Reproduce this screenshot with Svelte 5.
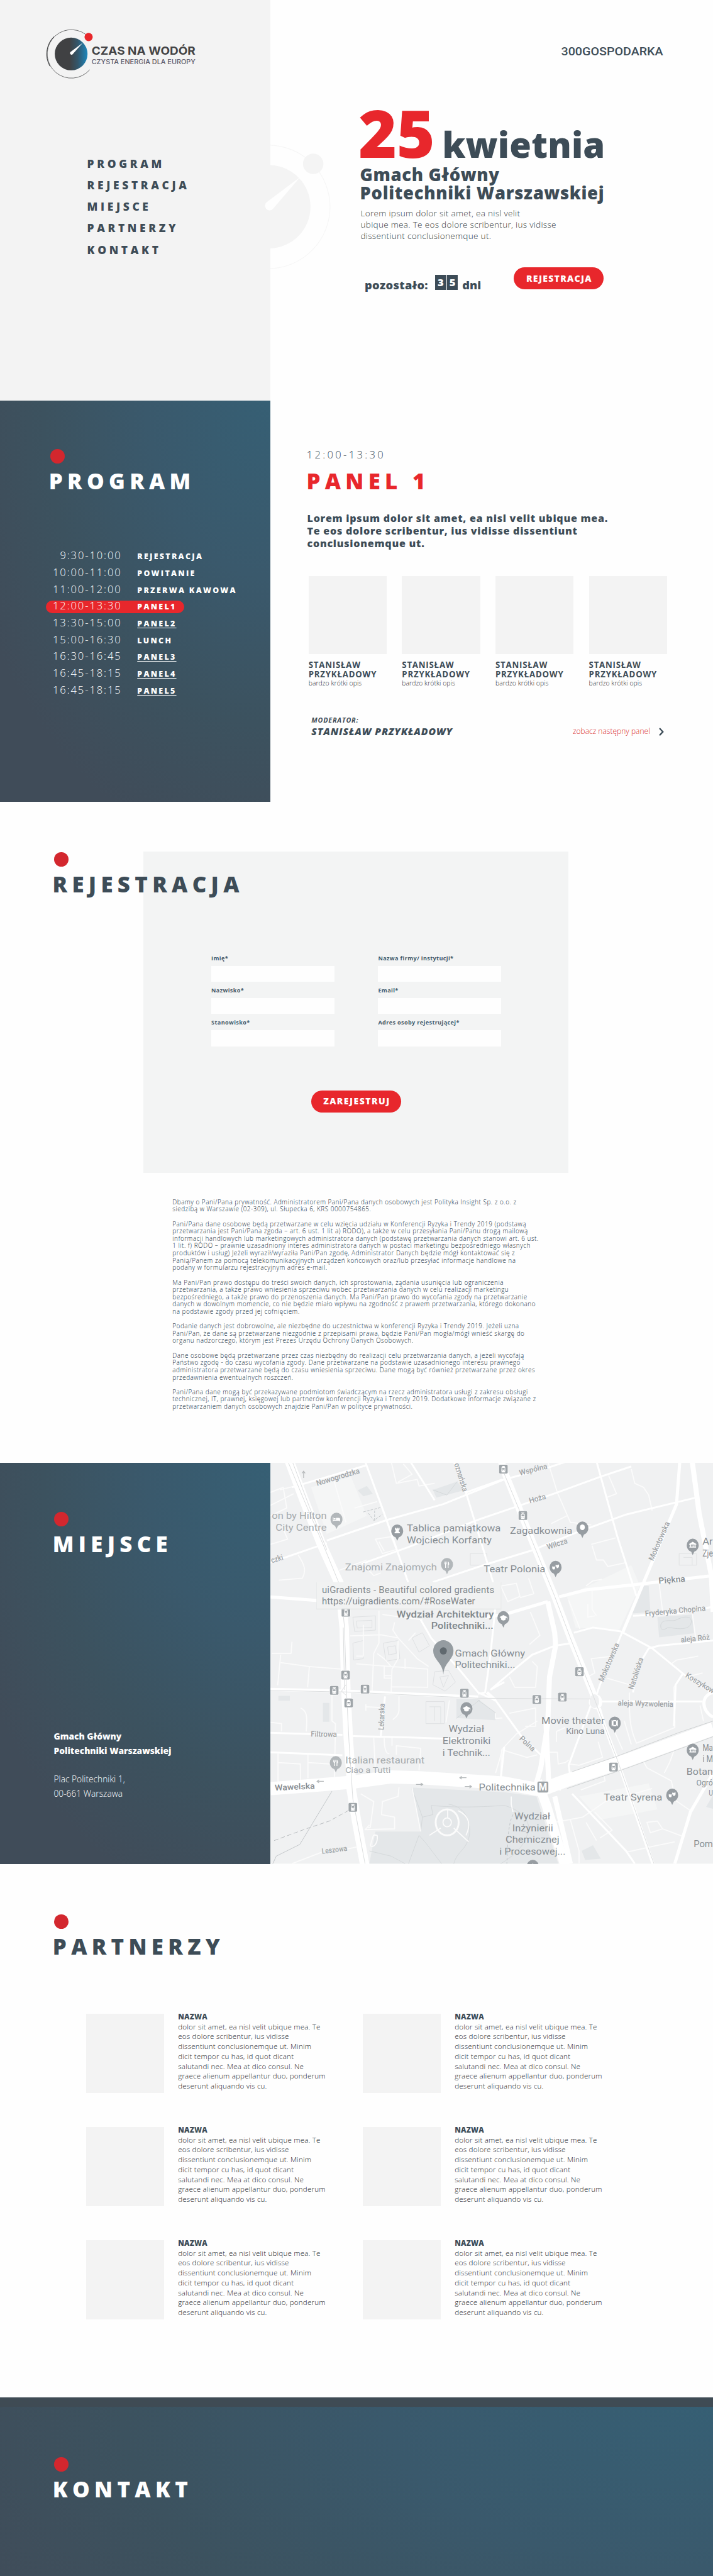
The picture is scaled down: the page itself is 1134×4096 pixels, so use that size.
<script>
  const nav = ['PROGRAM', 'REJESTRACJA', 'MIEJSCE', 'PARTNERZY', 'KONTAKT'];

  const schedule = [
    { time: '9:30-10:00', name: 'REJESTRACJA' },
    { time: '10:00-11:00', name: 'POWITANIE' },
    { time: '11:00-12:00', name: 'PRZERWA KAWOWA' },
    { time: '12:00-13:30', name: 'PANEL1', active: true },
    { time: '13:30-15:00', name: 'PANEL2', link: true },
    { time: '15:00-16:30', name: 'LUNCH' },
    { time: '16:30-16:45', name: 'PANEL3', link: true },
    { time: '16:45-18:15', name: 'PANEL4', link: true },
    { time: '16:45-18:15', name: 'PANEL5', link: true }
  ];

  const speakers = [1, 2, 3, 4];
  const partners = [1, 2, 3, 4, 5, 6];

  const fields = [
    'Imię*', 'Nazwa firmy/ instytucji*',
    'Nazwisko*', 'Email*',
    'Stanowisko*', 'Adres osoby rejestrującej*'
  ];

  const legal = [
    ['Dbamy o Pani/Pana prywatność. Administratorem Pani/Pana danych osobowych jest Polityka Insight Sp. z o.o. z',
      'siedzibą w Warszawie (02-309), ul. Słupecka 6, KRS 0000754865.'],
    ['Pani/Pana dane osobowe będą przetwarzane w celu wzięcia udziału w Konferencji Ryzyka i Trendy 2019 (podstawą',
      'przetwarzania jest Pani/Pana zgoda – art. 6 ust. 1 lit a) RODO), a także w celu przesyłania Pani/Panu drogą mailową',
      'informacji handlowych lub marketingowych administratora danych (podstawę przetwarzania danych stanowi art. 6 ust.',
      '1 lit. f) RODO – prawnie uzasadniony interes administratora danych w postaci marketingu bezpośredniego własnych',
      'produktów i usług) Jeżeli wyraził/wyraziła Pani/Pan zgodę, Administrator Danych będzie mógł kontaktować się z',
      'Panią/Panem za pomocą telekomunikacyjnych urządzeń końcowych oraz/lub przesyłać informacje handlowe na',
      'podany w formularzu rejestracyjnym adres e-mail.'],
    ['Ma Pani/Pan prawo dostępu do treści swoich danych, ich sprostowania, żądania usunięcia lub ograniczenia',
      'przetwarzania, a także prawo wniesienia sprzeciwu wobec przetwarzania danych w celu realizacji marketingu',
      'bezpośredniego, a także prawo do przenoszenia danych. Ma Pani/Pan prawo do wycofania zgody na przetwarzanie',
      'danych w dowolnym momencie, co nie będzie miało wpływu na zgodność z prawem przetwarzania, którego dokonano',
      'na podstawie zgody przed jej cofnięciem.'],
    ['Podanie danych jest dobrowolne, ale niezbędne do uczestnictwa w konferencji Ryzyka i Trendy 2019. Jeżeli uzna',
      'Pani/Pan, że dane są przetwarzane niezgodnie z przepisami prawa, będzie Pani/Pan mogła/mógł wnieść skargę do',
      'organu nadzorczego, którym jest Prezes Urzędu Ochrony Danych Osobowych.'],
    ['Dane osobowe będą przetwarzane przez czas niezbędny do realizacji celu przetwarzania danych, a jeżeli wycofają',
      'Państwo zgodę - do czasu wycofania zgody. Dane przetwarzane na podstawie uzasadnionego interesu prawnego',
      'administratora przetwarzane będą do czasu wniesienia sprzeciwu. Dane mogą być również przetwarzane przez okres',
      'przedawnienia ewentualnych roszczeń.'],
    ['Pani/Pana dane mogą być przekazywane podmiotom świadczącym na rzecz administratora usługi z zakresu obsługi',
      'technicznej, IT, prawnej, księgowej lub partnerów konferencji Ryzyka i Trendy 2019. Dodatkowe informacje związane z',
      'przetwarzaniem danych osobowych znajdzie Pani/Pan w polityce prywatności.']
  ];

  // The map grid is finer across than down; K restores the proportions of glyphs and icons.
  const K = 1.4925;

  // text, start x, start y, end x, end y, font size, tone
  const labels = [
    ['on by Hilton', 14, 222, 330, 222, 37, 'soft'],
    ['City Centre', 36, 267, 330, 267, 37, 'soft'],
    ['Nowogrodzka', 275, 95, 522, 45, 30, 'road'],
    ['czki', 15, 392, 82, 378, 30, 'road'],
    ['Tablica pamiątkowa', 790, 270, 1330, 270, 37, 'poi'],
    ['Wojciech Korfanty', 790, 315, 1277, 315, 37, 'poi'],
    ['Znajomi Znajomych', 435, 420, 963, 420, 37, 'soft'],
    ['Teatr Polonia', 1232, 427, 1586, 427, 37, 'poi'],
    ['Wydział Architektury', 731, 601, 1290, 601, 37, 'strong'],
    ['Politechniki...', 930, 646, 1288, 646, 37, 'strong'],
    ['Gmach Główny', 1066, 751, 1470, 751, 37, 'poi'],
    ['Politechniki...', 1066, 796, 1413, 796, 37, 'poi'],
    ['oznańska', 1062, 10, 1112, 118, 30, 'road'],
    ['Lekarska', 657, 1035, 664, 933, 30, 'road'],
    ['Filtrowa', 238, 1060, 388, 1061, 30, 'road'],
    ['Wydział', 1030, 1043, 1235, 1043, 37, 'poi'],
    ['Elektroniki', 995, 1088, 1272, 1088, 37, 'poi'],
    ['i Technik...', 995, 1134, 1270, 1134, 37, 'poi'],
    ['Italian restaurant', 437, 1162, 892, 1162, 37, 'soft'],
    ['Ciao a Tutti', 437, 1200, 697, 1200, 32, 'soft'],
    ['Wawelska', 32, 1268, 262, 1260, 32, 'main'],
    ['Leszowa', 303, 1511, 449, 1499, 29, 'road'],
    ['Politechnika', 1204, 1268, 1530, 1268, 37, 'poi'],
    ['Wspólna', 1440, 55, 1600, 28, 30, 'road'],
    ['Hoża', 1497, 162, 1592, 144, 30, 'road'],
    ['Zagadkownia', 1383, 279, 1741, 279, 37, 'poi'],
    ['Wilcza', 1600, 340, 1716, 315, 30, 'road'],
    ['Mokotowska', 2206, 385, 2302, 238, 30, 'road'],
    ['Piękna', 2238, 471, 2391, 463, 32, 'main'],
    ['Fryderyka Chopina', 2160, 597, 2508, 575, 30, 'road'],
    ['aleja Róż', 2366, 698, 2532, 686, 30, 'road'],
    ['Natolińska', 2092, 880, 2150, 760, 30, 'road'],
    ['Mokotowska', 1918, 850, 2012, 705, 30, 'road'],
    ['Koszykow', 2388, 830, 2548, 895, 30, 'road'],
    ['aleja Wyzwolenia', 2002, 940, 2321, 946, 30, 'road'],
    ['Movie theater', 1563, 1010, 1927, 1010, 37, 'poi'],
    ['Kino Luna', 1705, 1050, 1927, 1050, 32, 'poi'],
    ['Polna', 1434, 1070, 1512, 1118, 30, 'road'],
    ['Teatr Syrena', 1922, 1307, 2258, 1307, 37, 'poi'],
    ['Wydział', 1408, 1379, 1615, 1379, 37, 'poi'],
    ['Inżynierii', 1396, 1424, 1631, 1424, 37, 'poi'],
    ['Chemicznej', 1357, 1469, 1667, 1469, 37, 'poi'],
    ['i Procesowej...', 1322, 1515, 1702, 1515, 37, 'poi'],
    ['Ar', 2489, 320, 2548, 320, 37, 'poi'],
    ['Zje', 2489, 367, 2549, 367, 37, 'poi'],
    ['Ma', 2490, 1114, 2549, 1114, 37, 'poi'],
    ['i M', 2490, 1159, 2549, 1159, 37, 'poi'],
    ['Botan', 2397, 1207, 2549, 1207, 37, 'poi'],
    ['Ogró', 2454, 1247, 2549, 1247, 32, 'poi'],
    ['U', 2525, 1286, 2549, 1286, 32, 'poi'],
    ['Pom', 2438, 1484, 2549, 1484, 37, 'poi']
  ].map(([text, x1, y1, x2, y2, size, tone]) => {
    const dx = (x2 - x1) / K;
    const dy = y2 - y1;
    return {
      text, size, tone,
      len: Math.hypot(dx, dy),
      at: `translate(${x1} ${y1}) scale(${K} 1) rotate(${(Math.atan2(dy, dx) * 180) / Math.PI})`
    };
  });

  const pins = [
    [386, 223, 'bed', true], [735, 268, 'castle'], [1021, 397, 'food', true], [1345, 602, 'school'],
    [1133, 952, 'school'], [382, 1160, 'food', true], [1799, 257, 'dot'], [1645, 408, 'mask'],
    [2433, 323, 'museum'], [1985, 1008, 'film'], [2433, 1112, 'museum'], [2315, 1285, 'mask'], [1514, 1559, 'school']
  ];

  const trams = [
    [1345, 30], [1457, 209], [440, 581], [438, 823], [373, 882], [550, 877], [456, 930],
    [1121, 893], [480, 1332], [1782, 810], [1537, 917], [1684, 908], [1978, 1177]
  ];
  const arrows = [[292, 1232, 180], [1112, 1218, 180], [864, 1244, 0], [1144, 1252, 0], [197, 50, -90]];
</script>

{#snippet heading(text)}
  <div class="heading">
    <span class="dot"></span>
    <h2>{text}</h2>
  </div>
{/snippet}

<main>
  <section class="hero">
    <div class="hero-side">
      <svg class="logo" viewBox="80 50 310 110">
        <defs>
          <linearGradient id="dial" x1="0" x2="1" y1="0" y2="0">
            <stop offset="0.45" stop-color="#404143" />
            <stop offset="0.7" stop-color="#33566a" />
            <stop offset="1" stop-color="#1c87bd" />
          </linearGradient>
        </defs>
        <path d="M164.5 66.3A46.4 46.4 0 1 0 172.2 134.5" fill="none" stroke="#3f4042" stroke-width="0.9" />
        <path d="M104 71A46.4 46.4 0 0 0 96 127" fill="none" stroke="#3f4042" stroke-width="1.3" />
        <circle cx="136.8" cy="104" r="31.4" fill="url(#dial)" />
        <path d="M159.2 82.6L140.2 104A3 3 0 1 1 135.8 100Z" fill="#fff" />
        <circle cx="170.3" cy="71.5" r="7.9" fill="#e8262a" />
        <text x="176" y="105.3" class="logo-name" textLength="199" lengthAdjust="spacingAndGlyphs">CZAS NA WODÓR</text>
        <text x="176" y="123" class="logo-sub" textLength="199" lengthAdjust="spacingAndGlyphs">CZYSTA ENERGIA DLA EUROPY</text>
      </svg>
      <nav>
        {#each nav as item}<a href="#{item.toLowerCase()}">{item}</a>{/each}
      </nav>
    </div>

    <svg class="watermark" viewBox="500 270 140 250">
      <path d="M518 278.2A118.3 118.3 0 0 1 632.4 396.4A118.3 118.3 0 0 1 518 514.7" fill="none" stroke="#f6f6f6" stroke-width="1.4" />
      <path d="M518 316.5A79.8 79.8 0 0 1 518 476Z" fill="#f4f4f4" />
      <path d="M575.5 339L523.7 399.5A8.8 8.8 0 1 1 511.8 387Z" fill="#fefefe" />
      <circle cx="600.2" cy="314" r="19.6" fill="#f4f4f4" />
    </svg>

    <div class="hero-main">
      <svg class="brand" viewBox="0 0 200 24">
        <text x="0.5" y="20" textLength="195.5" lengthAdjust="spacingAndGlyphs">300GOSPODARKA</text>
      </svg>
      <div class="date"><span class="day">25</span><span class="month">kwietnia</span></div>
      <h1>Gmach Główny<br />Politechniki Warszawskiej</h1>
      <p>Lorem ipsum dolor sit amet, ea nisl velit<br />ubique mea. Te eos dolore scribentur, ius vidisse<br />dissentiunt conclusionemque ut.</p>
      <div class="cta">
        <div class="countdown">
          <span class="word">pozostało:</span>
          <span class="digit">3</span><span class="digit">5</span>
          <span class="word days">dni</span>
        </div>
        <button class="pill">REJESTRACJA</button>
      </div>
    </div>
  </section>

  <section class="split">
    <div class="side program">
      {@render heading('PROGRAM')}
      <ul class="schedule">
        {#each schedule as s}
          <li class:active={s.active}>
            <span class="time">{s.time}</span>
            <span class="name" class:link={s.link}>{s.name}</span>
          </li>
        {/each}
      </ul>
    </div>
    <div class="panel">
      <div class="panel-time">12:00-13:30</div>
      <h3>PANEL 1</h3>
      <p class="lead">Lorem ipsum dolor sit amet, ea nisl velit ubique mea.<br />Te eos dolore scribentur, ius vidisse dissentiunt<br />conclusionemque ut.</p>
      <div class="speakers">
        {#each speakers as _}
          <article>
            <div class="photo"></div>
            <h4>STANISŁAW<br />PRZYKŁADOWY</h4>
            <p>bardzo krótki opis</p>
          </article>
        {/each}
      </div>
      <footer>
        <div class="moderator">
          <span>MODERATOR:</span>
          <strong>STANISŁAW PRZYKŁADOWY</strong>
        </div>
        <a class="next" href="#panel2">
          zobacz następny panel
          <svg viewBox="0 0 10 16"><path d="M1.2 1.2L7.6 8L1.2 14.8" fill="none" stroke="#3c4c57" stroke-width="2.7" /></svg>
        </a>
      </footer>
    </div>
  </section>

  <section class="register">
    <div class="register-title">{@render heading('REJESTRACJA')}</div>
    <form>
      <div class="fields">
        {#each fields as f}
          <label>{f}<input type="text" /></label>
        {/each}
      </div>
      <button class="pill submit" type="button">ZAREJESTRUJ</button>
    </form>
    <div class="legal">
      {#each legal as para}
        <p>{#each para as line}<span>{line}</span>{/each}</p>
      {/each}
    </div>
  </section>

  <section class="split">
    <div class="side place">
      {@render heading('MIEJSCE')}
      <address>
        <strong>Gmach Główny<br />Politechniki Warszawskiej</strong>
        <span>Plac Politechniki 1,<br />00-661 Warszawa</span>
      </address>
    </div>
    <svg class="map" viewBox="6 6 2544 1543" preserveAspectRatio="none">
      <rect x="6" y="6" width="2544" height="1543" fill="#f0f1f2" />

      <!-- parks and blocks -->
      <g fill="#e4e7e9">
        <path d="M815 1256L1350 1274L1535 1290L1660 1549H575L610 1425H870Z" />
        <path d="M1075 915L1200 915L1300 968V997L1075 988Z" />
        <path d="M2135 480H2180L2190 580L2085 586Z" />
        <path d="M2230 600L2430 590L2440 662L2240 678Z" />
        <path d="M940 110L1080 78L1118 112L960 140Z" />
        <path d="M52 903H118V922H52ZM308 930H345V1003H308ZM508 112L560 95L595 125L540 135Z" />
        <path d="M1795 1500L1860 1478L1905 1530L1815 1535ZM2510 1330L2550 1285V1338Z" />
      </g>
      <g fill="#f5f6f6">
        <path d="M1710 520L2080 400L2130 480L2010 650L1760 640Z" />
        <path d="M240 100L470 60L560 210L330 280Z" />
        <path d="M1780 1290L2180 1240L2230 1340L1900 1380Z" />
      </g>

      <!-- paths inside the park, building outlines -->
      <g class="line thin">
        <path d="M930 1325C1100 1335 1220 1330 1350 1325C1440 1340 1490 1380 1490 1410C1480 1480 1400 1520 1330 1549" stroke="#d5d9db" />
        <path d="M820 1260L880 1370L940 1360L930 1325M880 1370L870 1425M1030 1320C1130 1330 1160 1390 1150 1440C1130 1500 1080 1500 1060 1549M800 1549L860 1440L900 1470L990 1549M575 1500L700 1520L780 1549" stroke="#d5d9db" />
        <path d="M940 110L1020 130L1080 78M1075 990L1210 918M1200 920L1300 968M2250 640C2240 600 2320 620 2340 610C2400 590 2440 600 2420 630C2390 655 2320 640 2290 640C2270 650 2250 650 2250 640Z" stroke="#d5d9db" />
        <path d="M28 1460L210 1415L345 1385L480 1335" stroke="#b9bdc0" stroke-dasharray="7 4" />
        <path d="M20 1549L40 1520L175 1475L360 1270" stroke="#c3c7ca" />
        <path d="M540 195L640 178M570 200L600 228L650 205M605 190V230" stroke="#c3c7ca" stroke-dasharray="4 2" />
        <path d="M1400 1360C1370 1400 1370 1470 1365 1549" stroke="#c3c7ca" stroke-dasharray="4 3" />
        <path d="M480 600L610 595V650L490 655ZM500 615L590 612V640L505 642ZM480 700L540 690V760L485 765ZM655 700L740 690L750 760L670 770ZM680 715L725 710L730 740L685 745ZM820 680L880 660L920 710L860 735ZM900 925H1005V1010H900ZM920 945H985V1010M950 945V1000M950 810L1030 805L1070 850L1010 885L940 860ZM980 830L1030 825L1000 870Z" stroke="#dfe1e3" />
        <path d="M1155 355H1250V400H1155ZM2355 355H2455V400H2355ZM2380 370H2430V400" stroke="#e0e2e3" />
      </g>

      <!-- minor streets -->
      <g class="line small">
        <path d="M6 120L80 100L100 180L6 210M60 110L150 95M6 170L140 125M6 320L105 300L80 260" />
        <path d="M55 458L190 450C215 420 200 395 165 360M400 420L560 380M545 400L600 440L640 430" />
        <path d="M15 740H125L130 695M48 862L65 745M65 775L230 790L410 800M230 790L220 870" />
        <path d="M180 950C215 960 220 980 212 1040M360 900V1000L380 1010L375 1215M6 1005L70 1010V1040M50 1125V1240M50 1160L178 1165L180 1240M222 1125V1220M225 1160L345 1165" />
        <path d="M465 672L640 668L740 680L850 760L915 790M540 630V750L500 750M630 575V700L600 740L590 890M720 620L710 650L740 680M650 590L760 600L880 610M800 690L840 660M620 740L660 760L700 790M740 690V760L705 800L700 890M780 760V800M500 780L700 790L910 800V870L700 868M660 790V835H705M660 825H700" />
        <path d="M745 905V960C740 985 720 985 710 995M555 935V960M555 945L640 948M1035 920L1015 1005M600 1065L610 1200M660 1065C660 1100 670 1130 690 1125M730 1130V1095L870 1105L860 1190M705 1060V1095" />
        <path d="M525 1280L600 1310L580 1410H560M745 1255L740 1290L650 1310L645 1360L720 1370V1415L550 1418L575 1400M820 1256L870 1425M580 1480C600 1440 590 1435 620 1440C625 1470 600 1490 580 1480M130 1549L300 1505M450 1492L500 1485" />
        <path d="M700 0L730 85L850 70L860 95L950 85M770 10L820 50L740 80M610 300L650 355L730 340L700 290ZM630 310L660 345M490 180L620 155M370 70L440 235M1105 560L1095 600" />
        <path d="M1330 480L1420 470L1440 520L1370 540ZM1490 450L1520 510L1440 525M1500 580L1555 670L1495 705M1380 830L1410 870L1530 870L1540 790L1510 770M1300 970V990L1340 988M1380 970L1530 950V1020H1470M1335 1110L1330 1215M1335 1110L1420 1050L1540 1000M1335 1110L1480 1140L1540 1130" />
        <path d="M1850 320L1990 295M1855 325L1880 380L1920 380L1945 405L2050 390M1950 55L1995 125L1935 140M2080 30L2100 85L2150 100L2180 130L2200 190M1600 0L1655 120L1730 235L1850 245M1620 240L1710 210M1820 480L1860 460L1910 455M1855 500V570L1880 595M1830 550V600L1870 595M1720 535L1785 645" />
        <path d="M1830 830L1870 815L1850 760L1980 750M1940 835L2070 860M2310 780L2340 765L2465 750M2400 830L2490 815M1650 1080V1040L1700 1025M1600 1120H1655L1660 1165L1700 1160L1720 1150M1720 1165L1780 1170L1915 1140L1890 1080M2070 890C2065 1000 2080 1040 2110 1085L2330 1025V1000M2475 940L2495 1000M1720 1220L1920 1205L1930 1230L1790 1265" />
        <path d="M2145 1150L2170 1180L2310 1230L2320 1260M2330 1105L2300 1160L2270 1200M2300 1290L2420 1345M1640 1390L1800 1370L1930 1310L2200 1260M1870 1350L1970 1420L1900 1450M1820 1390L1880 1460M2170 1390L2230 1385L2260 1415L2190 1430ZM2260 1415L2380 1445M2050 1505L2220 1480L2330 1465M1730 1380L1780 1500V1549M1300 1200L1340 1110M1390 1290V1320L1400 1350" />
        <path d="M2240 470L2260 580M2430 585L2450 680M2330 1025L2325 870L2370 820M1970 1020L2030 1110M2040 1000L2080 1090" />
      </g>

      <!-- streets -->
      <g class="line mid">
        <path d="M130 100L560 15M330 305L680 225L1000 165L1350 70L1600 25L1800 -20M6 390L330 315M530 395L800 330L1200 225L1405 178L1655 120L1900 60L2080 20M940 465L1230 400L1500 345L1780 270L2050 205L2450 140" />
        <path d="M550 0L660 200L800 470M800 -10L950 150M1060 0L1130 120L1230 340L1310 520M1880 0L2000 290L2110 520M1130 120L1340 70M870 610L930 680L1090 800L1200 890L1300 920L1450 1060L1560 1130" />
        <path d="M1310 490L1270 750L1240 890L1200 895M1270 880L1410 800L1510 745L1640 710L1740 700M1270 880L1350 850M6 1045L240 1050L420 1053M480 1058L760 1062L1100 1070M6 1120L420 1132M665 905L640 1060M1350 1100L1330 1220M1750 660L1860 640L2020 655L2200 720L2400 830L2550 895" />
        <path d="M2030 655L1900 860L1880 900M2090 890L2110 800L2180 720L2240 710L2550 690M2090 595L2360 585L2550 560M1860 925H2490M1850 935L1720 1170L1730 1215M1900 950L1960 1090M2325 1020L2335 860L2380 815M1740 1280L2050 1500L2100 1549" />
      </g>
      <g class="line large">
        <path d="M2360 -10L2340 165L2130 500L2030 660M6 522L280 536M6 878L440 885L1200 908M1300 920L1250 890M1240 600L1350 590L1600 540M1665 522L1820 495L2100 475L2550 440" />
        <path d="M1870 905C1900 900 1910 925 1900 940C1880 955 1850 945 1845 930C1845 915 1855 905 1870 905M2550 890C2480 900 2480 960 2550 985" />
        <path d="M1860 900L2000 1150L2210 1560M2550 1200L2420 1350L2330 1549" />
      </g>
      <g class="line wide">
        <path d="M2430 0L2470 200L2540 440L2550 580M1600 540L1640 660L1645 710L1610 830L1600 1010L1560 1180L1530 1250M1590 1010L1605 1230L1680 1260M1640 1290L1730 1549" />
        <path class="ave" d="M1330 -10L1345 30L1500 290L1640 520L1730 680L1870 910" />
        <path class="road" d="M110 -10L200 150L300 320L405 475L430 640L440 880L455 1080L475 1260" />
        <path class="road" d="M465 1240L500 1380L550 1560" />
        <path class="artery" d="M6 1260L250 1248L480 1235L700 1215L860 1218L1340 1238L1560 1265L1700 1230L2060 1150L2550 1030" />
        <path class="road" d="M1540 1230L1590 1320L1700 1560" />
      </g>
      <circle cx="1868" cy="924" r="27" fill="#f0f1f2" />

      <!-- tram tracks and kerbs -->
      <g class="line thin" stroke="#dcdedf">
        <path d="M110 6L200 150L315 330L410 485L432 640L443 880L458 1080L480 1300L550 1549M135 6L230 175L330 340M425 640L432 880" />
        <path d="M1345 40L1500 290L1640 520L1730 680L1860 900L2000 1150L2210 1549" />
        <path d="M6 882L440 888L1200 912L1850 915M440 860L415 885L440 900" />
        <path d="M1740 1195L2000 1135L2350 1045L2550 1000M1710 1260L2060 1180L2550 1060" stroke="#cfd2d3" />
      </g>

      <!-- round square in the park -->
      <g class="line small">
        <ellipse cx="1022" cy="1390" rx="66" ry="50" stroke-width="3" />
        <ellipse cx="1022" cy="1390" rx="24" ry="17" />
        <path d="M1025 1340V1372M985 1412L920 1440M1060 1412L1145 1465M1085 1345C1150 1365 1160 1400 1130 1440" />
      </g>

      {#each labels as l}
        <text class={l.tone} transform={l.at} font-size={l.size} textLength={l.len} lengthAdjust="spacingAndGlyphs">{l.text}</text>
      {/each}

      {#each trams as [x, y]}
        <g transform="translate({x} {y}) scale({K} 1)">
          <rect x="-18" y="-18.5" width="36" height="37" rx="5" fill="#fff" />
          <rect x="-16.5" y="-17" width="33" height="34" rx="4" fill="#9fa5a9" />
          <path d="M-6 -12H6V-9H2V-7H7L8 9H5L8 13H-8L-5 9H-8L-7 -7H-2V-9H-6Z" fill="#fff" />
          <path d="M-5 -4H5V2H-5ZM-5 5H-2V7H-5ZM2 5H5V7H2Z" fill="#9fa5a9" />
        </g>
      {/each}

      {#each arrows as [x, y, turn]}
        <path transform="translate({x} {y}) scale({K} 1) rotate({turn})" d="M-14 0H10M4 -6L12 0L4 6" fill="none" stroke="#b4b8ba" stroke-width="3" />
      {/each}

      {#each pins as [x, y, kind, faded]}
        <g transform="translate({x} {y}) scale({K} 1)" fill={faded ? '#b2b7ba' : '#979da2'}>
          <path d="M0 38L-6 25C-17 21 -23 11 -23 0A23 25 0 0 1 23 0C23 11 17 21 6 25Z" />
          <g fill="#fff">
            {#if kind === 'dot'}
              <ellipse cx="0" cy="-3" rx="9.5" ry="11" />
            {:else if kind === 'food'}
              <path d="M-10 -11H-8V-4H-6.500V-11H-4.500V-4H-3V-11H-1V-3L-4 1V13H-7V1L-10 -3ZM3 -11C8 -11 9 -3 8 2H6V13H3Z" />
            {:else if kind === 'bed'}
              <path d="M-14 -8H-12V3H-2V-5H10C13 -5 14 -2 14 0V9H12V6H-12V9H-14ZM-11 -4H-4V1H-11Z" />
            {:else if kind === 'castle'}
              <path d="M-9 -12H-5V-9H-2V-12H2V-9H5V-12H9V-4H6L7 4H10V9H-10V4H-7L-6 -4H-9Z" />
            {:else if kind === 'school'}
              <path d="M-15 -2L0 -10L15 -2V7H13V0L9 2V7C4 12 -4 12 -9 7V2Z" />
            {:else if kind === 'mask'}
              <path d="M0 -10C5 -8 8 -8 13 -11V-3C12 3 7 5 4 3V-2H0ZM-13 -4C-9 -2 -6 -2 -2 -4V4C-3 10 -11 10 -13 4Z" />
            {:else if kind === 'film'}
              <path fill-rule="evenodd" d="M-12 -12H-9V-9H-6V-12H6V-9H9V-12H12V12H9V9H6V12H-6V9H-9V12H-12ZM-5 -7V7H5V-7Z" />
            {:else}
              <path d="M-14 -5L0 -13L14 -5V-2H11V6H13V9H-13V6H-11V-2H-14ZM-7 -2V6H-4V1H-1V6H1V1H4V6H7V-2Z" />
            {/if}
          </g>
        </g>
      {/each}

      <g transform="translate(1572 1254) scale({K} 1)">
        <rect x="-21" y="-21" width="42" height="42" rx="5" fill="#9fa5a9" />
        <text class="metro" y="13" text-anchor="middle" font-size="38">M</text>
      </g>

      <g transform="translate(1000 733) scale({K} 1)">
        <path d="M0 88C-2 60 -12 50 -25 32C-34 20 -39 10 -39 -3A39 41 0 0 1 39 -3C39 10 34 20 25 32C12 50 2 60 0 88Z" fill="#959ca1" />
        <ellipse cx="0" cy="-3" rx="13.500" ry="14" fill="#60696f" />
      </g>

      <!-- tooltip over the map -->
      <rect x="270" y="466" width="1063" height="105" fill="#e3e5e6" opacity="0.7" />
      <rect x="273" y="465" width="1057" height="102" fill="#f1f2f2" />
      <text class="tip" transform="translate(302 507) scale({K} 1)" font-size="36" textLength="664">uiGradients - Beautiful colored gradients</text>
      <text class="tip" transform="translate(302 551) scale({K} 1)" font-size="36" textLength="590">https://uigradients.com/#RoseWater</text>
    </svg>
  </section>

  <section class="partners">
    {@render heading('PARTNERZY')}
    <div class="grid">
      {#each partners as _}
        <article>
          <div class="box"></div>
          <div class="about">
            <h4>NAZWA</h4>
            <p>dolor sit amet, ea nisl velit ubique mea. Te<br />eos dolore scribentur, ius vidisse<br />dissentiunt conclusionemque ut. Minim<br />dicit tempor cu has, id quot dicant<br />salutandi nec. Mea at dico consul. Ne<br />graece alienum appellantur duo, ponderum<br />deserunt aliquando vis cu.</p>
          </div>
        </article>
      {/each}
    </div>
  </section>

  <section class="contact">{@render heading('KONTAKT')}</section>
</main>

<style>
  :global(html) { font-size: 8.299px; }
  :global(body) { margin: 0; background: #fefefe; overflow-x: hidden; }
  main {
    font-family: 'Open Sans', 'Noto Sans', sans-serif;
    color: #3d4c57;
    height: 493.55rem;
    overflow: hidden;
  }
  h1, h2, h3, h4, p, ul { margin: 0; padding: 0; font-weight: inherit; }
  a { color: inherit; text-decoration: none; }
  svg { display: block; }

  /* section headings */
  .heading { display: flex; flex-direction: column; }
  .dot { width: 2.75rem; height: 2.75rem; border-radius: 50%; background: #d3272e; }
  .heading h2 {
    margin: 0.86rem 0 0 -0.3rem;
    font-size: 4.2rem;
    line-height: 5rem;
    font-weight: 800;
    letter-spacing: 0.88rem;
    white-space: nowrap;
  }

  .pill {
    display: flex;
    align-items: center;
    justify-content: center;
    box-sizing: border-box;
    width: 17.23rem;
    height: 4.2rem;
    padding: 0 0 0.1rem 0.16rem;
    border: 0;
    border-radius: 2.1rem;
    background: #e8272c;
    color: #fff;
    font: 800 1.7rem/2.4rem 'Open Sans', sans-serif;
    letter-spacing: 0.155rem;
  }

  /* hero */
  .hero { position: relative; display: flex; height: 76.8rem; }
  .hero-side { width: 51.8rem; background: #f3f3f3; }
  .logo { width: 31rem; height: 11rem; margin: 5rem 0 0 8rem; }
  .logo-name { font: 700 21.6px Inter, sans-serif; fill: #434345; }
  .logo-sub { font: 500 12.2px Inter, sans-serif; fill: #5b5a6b; }
  nav { display: flex; flex-direction: column; margin: 13.25rem 0 0 16.7rem; }
  nav a { font-size: 2.1rem; line-height: 4.126rem; font-weight: 800; letter-spacing: 0.56rem; }
  .watermark { position: absolute; left: 50rem; top: 27rem; width: 14rem; height: 25rem; }
  .hero-main { padding-left: 17.3rem; }
  .brand { width: 20rem; height: 2.4rem; margin: 8.6rem 0 0 38.4rem; overflow: visible; }
  .brand text { font: 500 22.3px Roboto, sans-serif; fill: #3d4c57; }
  .date { display: flex; align-items: baseline; margin: 9.48rem 0 0 -0.4rem; height: 10.25rem; font-weight: 800; white-space: nowrap; }
  .day { font-size: 12.55rem; line-height: 10rem; color: #e8272c; letter-spacing: -0.04rem; }
  .month { font-size: 6.76rem; line-height: 6rem; margin-left: 1.44rem; letter-spacing: 0.023rem; }
  h1 { margin: 0.94rem 0 0 -0.1rem; font-size: 3.3rem; line-height: 3.53rem; font-weight: 800; letter-spacing: 0.082rem; white-space: nowrap; }
  .hero-main p { margin-top: 1.09rem; font-size: 1.64rem; line-height: 2.14rem; font-weight: 300; letter-spacing: 0.034rem; color: #343c41; }
  .cta { display: flex; margin-top: 5.03rem; }
  .countdown { display: flex; width: 29.38rem; padding-top: 1.43rem; box-sizing: border-box; font-weight: 800; }
  .word { margin: 0.45rem 1.35rem 0 0.8rem; font-size: 2.2rem; line-height: 3rem; letter-spacing: 0.035rem; }
  .days { margin: 0.45rem 0 0 0.7rem; letter-spacing: 0; }
  .digit { width: 2.1rem; height: 2.9rem; margin-right: 0.15rem; background: #3d4c57; color: #fff; font-size: 2rem; line-height: 2.8rem; text-align: center; }

  /* dark side columns */
  .split { display: flex; height: 76.8rem; }
  .side {
    flex: none;
    box-sizing: border-box;
    width: 51.8rem;
    color: #fff;
    background: radial-gradient(ellipse 120% 115% at 100% 0%, #365f74 0%, #3a596c 38%, #3c525f 70%, #404c59 100%);
  }
  .program { padding: 9.26rem 0 0 9.67rem; }
  .schedule { display: flex; flex-direction: column; gap: 0.87rem; margin: 10.79rem 0 0 -0.9rem; list-style: none; }
  .schedule li { display: flex; align-items: baseline; width: 26.56rem; height: 2.35rem; border-radius: 1.2rem; white-space: nowrap; }
  .schedule .active { background: #e8272c; }
  .time { flex: none; width: 14.56rem; text-align: right; font-size: 2rem; line-height: 1.97rem; font-weight: 300; letter-spacing: 0.226rem; }
  .name { flex: none; margin-left: 2.97rem; font-size: 1.5rem; line-height: 1.97rem; font-weight: 800; letter-spacing: 0.275rem; }
  .link { text-decoration: underline; text-decoration-thickness: 0.1rem; text-underline-offset: 0.2rem; text-decoration-skip-ink: none; }

  /* panel details */
  .panel { padding: 9.12rem 0 0 6.96rem; }
  .panel-time { font-size: 2rem; line-height: 2.4rem; font-weight: 300; letter-spacing: 0.4rem; }
  h3 { margin: 1.35rem 0 0 -0.03rem; font-size: 4.2rem; line-height: 5rem; font-weight: 800; letter-spacing: 0.88rem; color: #e8272c; }
  .lead { margin: 3.37rem 0 0 0.11rem; font-size: 1.94rem; line-height: 2.41rem; font-weight: 800; letter-spacing: 0.088rem; white-space: nowrap; }
  .speakers { display: grid; grid-template-columns: repeat(4, 15rem); gap: 2.91rem; margin: 5.13rem 0 0 0.37rem; }
  .photo { height: 14.9rem; background: #f3f3f3; }
  .speakers h4 { margin-top: 1.25rem; font-size: 1.6rem; line-height: 1.82rem; font-weight: 700; letter-spacing: 0.094rem; }
  .speakers p { font-size: 1.25rem; line-height: 1.6rem; font-weight: 300; letter-spacing: 0.007rem; color: #1f2a31; }
  footer { display: flex; justify-content: space-between; align-items: flex-end; width: 67.65rem; margin: 5.38rem 0 0 0.92rem; }
  .moderator { display: flex; flex-direction: column; font-style: italic; font-weight: 700; }
  .moderator span { font-size: 1.3rem; line-height: 1.8rem; letter-spacing: 0.098rem; }
  .moderator strong { font-size: 1.9rem; line-height: 2.6rem; letter-spacing: 0.102rem; }
  .next { display: flex; align-items: center; margin-bottom: 0.4rem; font-size: 1.45rem; line-height: 2rem; font-weight: 300; color: #d81f26; }
  .next svg { width: 1rem; height: 1.6rem; margin-left: 1.75rem; }

  /* registration */
  .register { position: relative; box-sizing: border-box; height: 126.7rem; padding-top: 9.6rem; }
  .register-title { position: absolute; left: 10.37rem; top: 9.7rem; }
  form { box-sizing: border-box; width: 81.44rem; height: 61.5rem; margin-left: 27.53rem; padding-top: 19.72rem; background: #f3f4f4; }
  .fields { display: grid; grid-template-columns: 23.6rem 23.6rem; column-gap: 8.37rem; row-gap: 0.97rem; margin-left: 12.97rem; }
  label { display: flex; flex-direction: column; gap: 0.64rem; font-size: 1.1rem; line-height: 1.5rem; font-weight: 700; letter-spacing: 0.044rem; color: #425a6b; }
  input { box-sizing: border-box; width: 100%; height: 3.06rem; border: 0; padding: 0; background: #fefefe; }
  .submit { margin: 8.54rem 0 0 32.14rem; letter-spacing: 0.175rem; }
  .legal { display: flex; flex-direction: column; gap: 1.4rem; margin: 4.93rem 0 0 33.05rem; font-size: 1.2rem; line-height: 1.4rem; font-weight: 300; letter-spacing: 0.061rem; white-space: nowrap; color: #0f2b3d; }
  .legal span { display: block; }

  /* place */
  .place { padding: 9.4rem 0 0 10.4rem; }
  address { display: flex; flex-direction: column; gap: 2.6rem; margin: 33.05rem 0 0 -0.1rem; font-size: 1.66rem; font-style: normal; white-space: nowrap; }
  address strong { line-height: 2.74rem; font-weight: 800; }
  address span { line-height: 2.83rem; font-weight: 300; }
  .map { flex: 1; height: 76.8rem; font-family: Roboto, sans-serif; }
  .map .soft { fill: #a6abae; }
  .map .poi { fill: #868d92; }
  .map .strong { fill: #80878c; font-weight: 500; }
  .map .road { fill: #9fa4a7; font-weight: 500; }
  .map .main { fill: #878d91; font-weight: 500; }
  .map .tip { fill: #82888c; }
  .map .metro { fill: #fff; font-weight: 700; }
  .line { fill: none; stroke-linejoin: round; stroke: #fff; }
  .line * { vector-effect: non-scaling-stroke; }
  .thin { stroke-width: 1px; stroke: #dcdedf; }
  .small { stroke-width: 1.8px; stroke: #fbfbfb; }
  .mid { stroke-width: 3px; }
  .large { stroke-width: 5px; }
  .wide { stroke-width: 8px; }
  .ave { stroke-width: 11px; }
  .map g .road { fill: none; stroke-width: 15px; }
  .artery { stroke-width: 21px; }

  /* partners */
  .partners { box-sizing: border-box; height: 102.2rem; padding: 9.7rem 0 0 10.4rem; }
  .grid { display: grid; grid-template-columns: 53.02rem 53.02rem; row-gap: 6.53rem; margin: 10.41rem 0 0 6.1rem; }
  .grid article { display: flex; height: 15.16rem; }
  .box { width: 14.95rem; background: #f3f3f3; }
  .about { margin: -0.37rem 0 0 2.68rem; font-size: 1.4rem; line-height: 1.9rem; white-space: nowrap; }
  .about h4 { font-weight: 800; letter-spacing: 0.02rem; }
  .about p { font-weight: 300; letter-spacing: 0.022rem; color: #1c252b; }

  /* contact */
  .contact {
    height: 32.4rem;
    border-top: 1.9rem solid #3f4b54;
    color: #fff;
    background: radial-gradient(ellipse 115% 240% at 100% 0%, #365f74 0%, #3a596c 40%, #3c525f 72%, #404c59 100%);
  }
  .contact .heading { padding: 9.67rem 0 0 10.4rem; }
</style>
